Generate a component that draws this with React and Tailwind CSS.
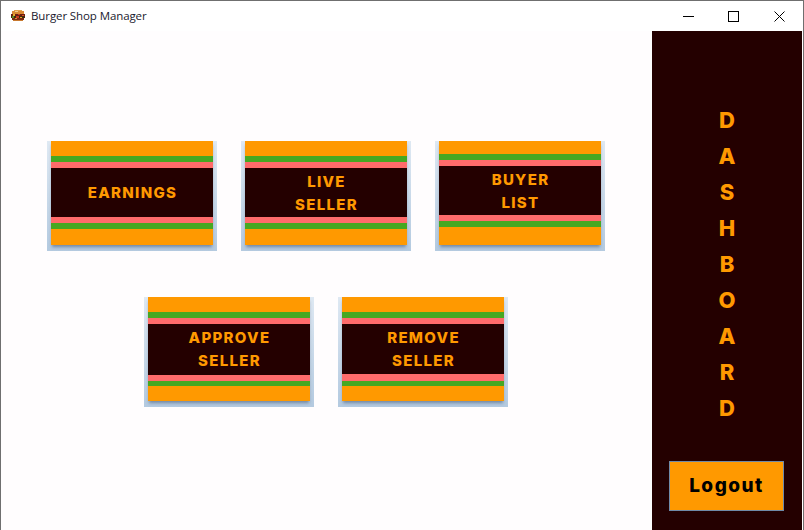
const cards = [
    [
        { lines: ['EARNINGS'], top: 'h-[15px]', dark: 'h-[49px]', pinkBottom: 'h-[6px]', greenBottom: 'h-[6px]', bottom: 'h-[16px]' },
        { lines: ['LIVE', 'SELLER'], top: 'h-[15px]', dark: 'h-[49px]', pinkBottom: 'h-[6px]', greenBottom: 'h-[6px]', bottom: 'h-[16px]' },
        { lines: ['BUYER', 'LIST'], top: 'h-[13px]', dark: 'h-[49px]', pinkBottom: 'h-[6px]', greenBottom: 'h-[6px]', bottom: 'h-[18px]' },
    ],
    [
        { lines: ['APPROVE', 'SELLER'], top: 'h-[15px]', dark: 'h-[51px] pb-[2px]', pinkBottom: 'h-[6px]', greenBottom: 'h-[5px]', bottom: 'h-[15px]' },
        { lines: ['REMOVE', 'SELLER'], top: 'h-[15px]', dark: 'h-[50px]', pinkBottom: 'h-[7px]', greenBottom: 'h-[5px]', bottom: 'h-[15px]' },
    ],
];

const letters = ['D', 'A', 'S', 'H', 'B', 'O', 'A', 'R', 'D'];

function BurgerIcon() {
    return (
        <svg width="14" height="12" viewBox="0 0 14 12" shapeRendering="crispEdges">
            <rect x="3" y="0" width="8" height="1" fill="#e0a050" />
            <rect x="1" y="1" width="12" height="3" fill="#d98a35" />
            <rect x="4" y="1" width="3" height="1" fill="#f3cf8c" />
            <rect x="0" y="4" width="14" height="2" fill="#6b1f10" />
            <rect x="2" y="4" width="2" height="2" fill="#e8b030" />
            <rect x="7" y="4" width="2" height="1" fill="#c83a20" />
            <rect x="11" y="5" width="2" height="2" fill="#d94a25" />
            <rect x="0" y="6" width="14" height="2" fill="#3f2a10" />
            <rect x="1" y="6" width="2" height="2" fill="#5c8a25" />
            <rect x="5" y="6" width="3" height="2" fill="#c83a20" />
            <rect x="9" y="7" width="2" height="1" fill="#e8b030" />
            <rect x="1" y="8" width="12" height="2" fill="#7a2a12" />
            <rect x="4" y="8" width="2" height="1" fill="#e09030" />
            <rect x="2" y="10" width="10" height="1" fill="#c87a30" />
        </svg>
    );
}

function WindowControls() {
    return (
        <div className="flex mr-px text-black">
            <div className="w-[46px] h-[30px] flex items-center justify-center">
                <svg width="11" height="11" viewBox="0 0 11 11" shapeRendering="crispEdges">
                    <path d="M0 5.5h11" stroke="currentColor" />
                </svg>
            </div>
            <div className="w-[45px] h-[30px] flex items-center justify-center">
                <svg width="11" height="11" viewBox="0 0 11 11" shapeRendering="crispEdges">
                    <rect x="0.5" y="0.5" width="10" height="10" fill="none" stroke="currentColor" />
                </svg>
            </div>
            <div className="w-[46px] h-[30px] flex items-center justify-center">
                <svg width="11" height="11" viewBox="0 0 11 11">
                    <path d="M0.5 0.5l10 10M10.5 0.5l-10 10" stroke="currentColor" />
                </svg>
            </div>
        </div>
    );
}

function MenuCard({ lines, top, dark, pinkBottom, greenBottom, bottom }) {
    return (
        <button className="w-[170px] h-[110px] bg-gradient-to-b from-[#dfe9f3] to-[#b4cae0] px-1 pb-[6px] flex">
            <div className="w-[162px] h-[104px] flex flex-col shadow-[0_3px_3px_-1px_rgba(70,90,120,0.6)]">
                <div className={`${top} bg-[#ff9900]`} />
                <div className="h-[6px] bg-[#46a822]" />
                <div className="h-[6px] bg-[#ff6b6b]" />
                <div className={`${dark} pl-[2px] bg-[#240000] flex flex-col items-center justify-center gap-[2px] text-[#ff9900] text-[15px] leading-[21px] font-extrabold tracking-[1.3px]`}>
                    {lines.map((line) => (
                        <span key={line}>{line}</span>
                    ))}
                </div>
                <div className={`${pinkBottom} bg-[#ff6b6b]`} />
                <div className={`${greenBottom} bg-[#46a822]`} />
                <div className={`${bottom} bg-[#ff9900]`} />
            </div>
        </button>
    );
}

export default function App() {
    return (
        <div className="w-[804px] h-[530px] overflow-hidden flex flex-col bg-white border-x border-t border-[#6f6f6f] font-['Inter',sans-serif]">
            {/* Title bar */}
            <div className="h-[30px] shrink-0 flex items-center bg-white">
                <div className="ml-[10px] mr-[6px] flex">
                    <BurgerIcon />
                </div>
                <span className="flex-1 text-[11.5px] tracking-[-0.1px] text-[#1a1a2e] font-['Open_Sans',sans-serif]">Burger Shop Manager</span>
                <WindowControls />
            </div>

            <div className="flex flex-1 min-h-0">
                {/* Menu cards */}
                <div className="w-[651px] bg-[#fffdfe] pt-[110px] pr-[2px] flex flex-col items-center gap-[46px]">
                    {cards.map((row, i) => (
                        <div key={i} className="flex gap-6">
                            {row.map((card) => (
                                <MenuCard key={card.lines.join(' ')} {...card} />
                            ))}
                        </div>
                    ))}
                </div>

                {/* Sidebar */}
                <div className="w-[150px] bg-[#240000] flex flex-col items-center pt-[71px]">
                    <div className="flex flex-col items-center text-[#ff9900] text-[22px] leading-[36px] font-extrabold">
                        {letters.map((letter, i) => (
                            <span key={i}>{letter}</span>
                        ))}
                    </div>
                    <button className="mt-[35px] mr-[2px] pl-[1px] w-[115px] h-[50px] bg-[#ff9900] border border-[#6f8aa8] text-black text-[19px] font-extrabold tracking-[1.5px]">
                        Logout
                    </button>
                </div>
            </div>
        </div>
    );
}
